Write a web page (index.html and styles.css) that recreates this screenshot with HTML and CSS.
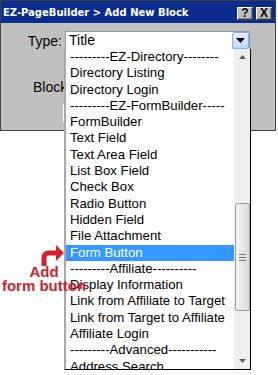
FILE: index.html
```html
<!DOCTYPE html>
<html lang="en">
<head>
    <meta charset="UTF-8">
    <meta name="viewport" content="width=device-width, initial-scale=1.0">
    <title>EZ-PageBuilder - Add New Block</title>
    <link rel="stylesheet" href="styles.css">
</head>
<body>
    <div class="dialog">
        <div class="titlebar">
            <span class="title">EZ-PageBuilder &gt; Add New Block</span>
            <span class="tb-buttons">
                <span class="tb-btn">?</span>
                <span class="tb-btn">X</span>
            </span>
        </div>
        <div class="dialog-body">
            <div class="row">
                <span class="label">Type:</span>
                <div class="select">
                    <span class="select-value">Title</span>
                    <span class="select-arrow">
                        <svg width="9" height="5" viewBox="0 0 9 5"><path d="M0 0H9L4.5 5Z" fill="#000"/></svg>
                    </span>
                </div>
            </div>
            <div class="row row-block">
                <span class="label-left">Block</span>
            </div>
            <div class="row row-btn">
                <span class="hidden-btn"></span>
            </div>
        </div>
    </div>

    <!-- open dropdown of the Type select -->
    <div class="dropdown">
        <ul class="options">
            <li>---------EZ-Directory--------</li>
            <li>Directory Listing</li>
            <li>Directory Login</li>
            <li>---------EZ-FormBuilder-----</li>
            <li>FormBuilder</li>
            <li>Text Field</li>
            <li>Text Area Field</li>
            <li>List Box Field</li>
            <li>Check Box</li>
            <li>Radio Button</li>
            <li>Hidden Field</li>
            <li>File Attachment</li>
            <li class="selected">Form Button</li>
            <li>---------Affiliate----------</li>
            <li>Display Information</li>
            <li>Link from Affiliate to Target</li>
            <li>Link from Target to Affiliate</li>
            <li>Affiliate Login</li>
            <li>---------Advanced-----------</li>
            <li>Address Search</li>
        </ul>
        <div class="scrollbar">
            <span class="sb-arrow">
                <svg width="7" height="4" viewBox="0 0 7 4"><path d="M0 4H7L3.5 0Z" fill="#606060"/></svg>
            </span>
            <span class="sb-thumb">
                <span class="grip"></span>
                <span class="grip"></span>
                <span class="grip"></span>
            </span>
            <span class="sb-arrow sb-down">
                <svg width="7" height="4" viewBox="0 0 7 4"><path d="M0 0H7L3.5 4Z" fill="#606060"/></svg>
            </span>
        </div>
    </div>

    <!-- annotation -->
    <svg class="note-arrow" width="30" height="26" viewBox="0 0 30 26">
        <path d="M6 23V15Q6 10 11 10H19" fill="none" stroke="#d5212a" stroke-width="5"/>
        <path d="M18 2L26 10L18 18Z" fill="#d5212a"/>
    </svg>
    <div class="note-text">Add<br>form button</div>
</body>
</html>
```

FILE: styles.css
```css
body {
    margin: 0;
    background: #fff;
    font-family: "Liberation Sans", Arial, sans-serif;
    width: 278px;
    height: 375px;
    overflow: hidden;
    position: relative;
}
.dialog {
    width: 276px;
    height: 131px;
    box-sizing: border-box;
    border: 1px solid #404040;
    background: #c0c0c0;
}
.titlebar {
    height: 22px;
    background: #0a2c8e;
    display: flex;
    align-items: center;
    justify-content: space-between;
    padding: 0 3px 0 2px;
    color: #fff;
}
.title {
    font-family: "DejaVu Sans", Verdana, sans-serif;
    font-weight: bold;
    font-size: 10px;
}
.tb-buttons {
    display: flex;
    gap: 3px;
    margin-top: 2px;
}
.tb-btn {
    width: 16px;
    height: 13px;
    box-sizing: border-box;
    background: #c0c0c0;
    border: 1px solid;
    border-color: #fff #404040 #404040 #fff;
    box-shadow: inset -1px -1px #808080;
    color: #000;
    font-weight: bold;
    font-size: 12px;
    display: flex;
    align-items: center;
    justify-content: center;
}
.dialog-body {
    padding-top: 8px;
}
.row {
    display: flex;
    align-items: center;
    height: 19px;
}
.label {
    width: 61px;
    margin-right: 3px;
    text-align: right;
    font-size: 14px;
}
.select {
    width: 185px;
    height: 19px;
    box-sizing: border-box;
    border: 1px solid #7f9db9;
    background: #fff;
    display: flex;
    align-items: stretch;
}
.select-value {
    flex: 1;
    padding-left: 3px;
    font-size: 14px;
    line-height: 17px;
}
.select-arrow {
    width: 17px;
    box-sizing: border-box;
    border: 1px solid #8db2e3;
    border-radius: 2px;
    background: linear-gradient(#e3f0fd, #b9d8f6);
    display: flex;
    align-items: center;
    justify-content: center;
}
.row-block {
    margin-top: 27px;
}
.label-left {
    padding-left: 32px;
    font-size: 14px;
}
.row-btn {
    margin-top: 8px;
    height: 20px;
    padding-left: 62px;
}
.hidden-btn {
    width: 70px;
    height: 20px;
    box-sizing: border-box;
    border: 1px solid;
    border-color: #fff #404040 #404040 #fff;
    background: #d4d0c8;
}

/* dropdown popup */
.dropdown {
    position: absolute;
    left: 64px;
    top: 49px;
    width: 187px;
    height: 321px;
    box-sizing: border-box;
    border-left: 2px solid #a9a9a9;
    border-right: 1px solid #000;
    border-bottom: 1px solid #000;
    background: #fff;
    display: flex;
}
.options {
    flex: 1;
    margin: 0;
    padding: 0;
    list-style: none;
    overflow: hidden;
}
.options li {
    height: 16.3px;
    line-height: 16.3px;
    padding-left: 4px;
    font-size: 13.2px;
    white-space: nowrap;
    overflow: hidden;
    color: #000;
}
.options li.selected {
    background: #3399ff;
    color: #fff;
}
.scrollbar {
    width: 16px;
    background: #efefef;
    display: flex;
    flex-direction: column;
    align-items: center;
}
.sb-arrow {
    height: 16px;
    display: flex;
    align-items: center;
    justify-content: center;
}
.sb-down {
    margin-top: auto;
}
.sb-thumb {
    margin-top: 138px;
    width: 15px;
    height: 108px;
    box-sizing: border-box;
    border: 1px solid #9c9c9c;
    border-radius: 2px;
    background: linear-gradient(90deg, #f4f4f4, #dadada);
    display: flex;
    flex-direction: column;
    align-items: center;
    justify-content: center;
    gap: 2px;
}
.grip {
    width: 7px;
    height: 1px;
    background: #7a7a7a;
}

/* annotation over the list */
.note-arrow {
    position: absolute;
    left: 38px;
    top: 243px;
}
.note-text {
    position: absolute;
    left: 0;
    top: 265px;
    width: 88px;
    text-align: center;
    color: #d5212a;
    font-weight: bold;
    font-size: 15px;
    line-height: 14px;
}
```
